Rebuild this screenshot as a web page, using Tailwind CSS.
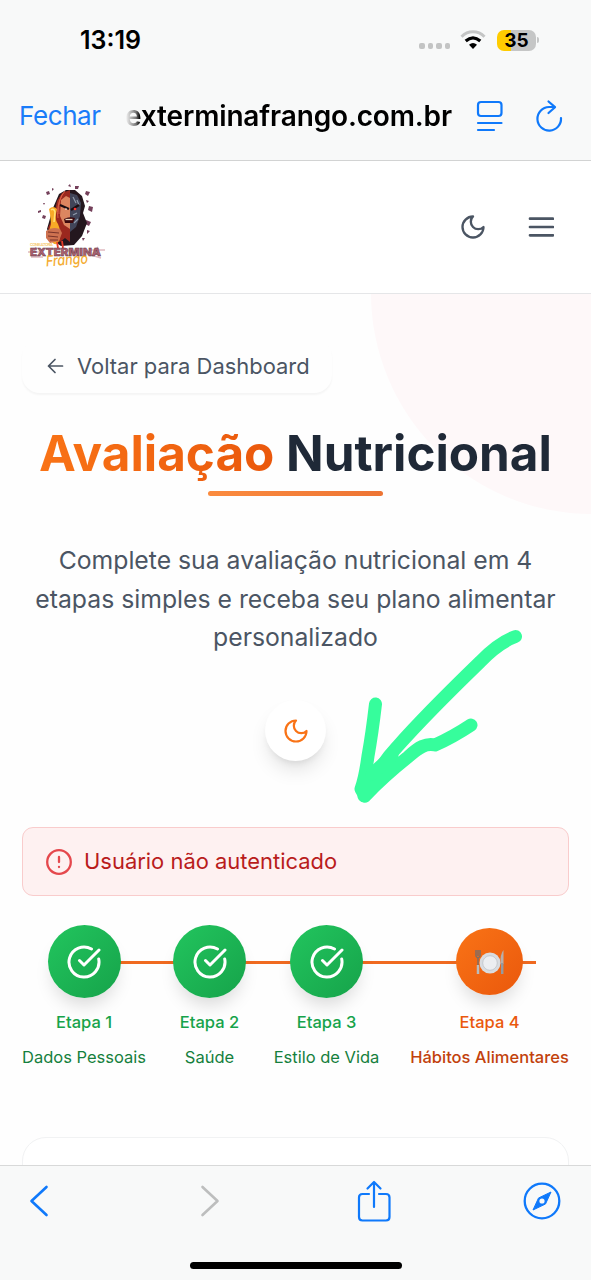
<!DOCTYPE html>
<html lang="pt-BR">
<head>
<meta charset="utf-8">
<title>Avaliação Nutricional</title>
<script src="https://cdn.jsdelivr.net/npm/@tailwindcss/browser@4"></script>
</head>
<body class="relative w-[591px] h-[1280px] overflow-hidden bg-[#fefefe] font-['Inter',sans-serif] flex flex-col">

<!-- Status bar and browser bar -->
<header class="h-[161px] shrink-0 bg-[#f8f9f9] border-b border-[#d2d3d3]">
  <div class="h-20 flex items-center pl-[80px] pr-[52px]">
    <span class="text-[25px] font-semibold leading-none text-black">13:19</span>
    <div class="ml-auto flex items-center">
      <div class="flex gap-[3px] mt-3 mr-[10px]">
        <i class="size-[5.500px] rounded-[2px] bg-[#c3c4c4]"></i><i class="size-[5.500px] rounded-[2px] bg-[#c3c4c4]"></i><i class="size-[5.500px] rounded-[2px] bg-[#c3c4c4]"></i><i class="size-[5.500px] rounded-[2px] bg-[#c3c4c4]"></i>
      </div>
      <svg class="w-[26px] h-[20px] mr-[11px]" viewBox="0 0 26 20" fill="none">
        <path d="M1.500 6.700C8 .2 18 .2 24.500 6.700" stroke="#c4c5c5" stroke-width="3"/>
        <path d="M5.700 11Q13 4.600 20.300 11" stroke="#000" stroke-width="3.200"/>
        <path d="M9 14.800Q13 11 17 14.800L13 19Z" fill="#000"/>
      </svg>
      <div class="w-[39px] h-[21px] rounded-[7px] bg-[linear-gradient(90deg,#ffcc00_36%,#c5c6c6_36%)] text-center text-[19px] leading-[21px] font-bold text-black">35</div>
      <i class="w-[2px] h-[6px] ml-px rounded-r bg-[#c5c6c6]"></i>
    </div>
  </div>
  <div class="h-[71px] flex items-center pl-[19px] pr-[28px]">
    <span class="text-[26px] tracking-[-0.4px] text-[#1a7cf9] w-[106px]">Fechar</span>
    <span class="text-[28px] font-semibold tracking-[-0.15px] whitespace-nowrap w-[327px] text-transparent bg-clip-text bg-[linear-gradient(90deg,#ffffff_0px,#777777_11px,#000_15px)]">exterminafrango.com.br</span>
    <svg class="w-[27px] h-[32px] ml-[24px]" viewBox="0 0 27 32" fill="none" stroke="#0f79fb" stroke-width="2.200" stroke-linecap="round"><rect x="2" y="2" width="23.500" height="14" rx="3"/><path d="M2 23H25.500M2 30H18"/></svg>
    <svg class="w-[28px] h-[34px] ml-auto" viewBox="0 0 28 34" fill="none" stroke="#0f79fb" stroke-width="2.200" stroke-linecap="round" stroke-linejoin="round"><path d="M26 19A11.800 11.800 0 1 1 14 8H20M13.500 2.500L20 8.200L13.500 14"/></svg>
  </div>
</header>

<!-- Site header -->
<nav class="relative z-10 h-[133px] shrink-0 bg-white border-b border-[#e5e6e8] flex items-center pl-[27px] pr-[37px]">
  <svg class="w-[80px] h-[90px]" viewBox="27 182 80 90">
    <g fill="#74405a"><path d="M46 192l3-1 1 3-3 1zM75 186l4 0-1 3-3 0zM86 191l4 1-2 4-3-2zM89 206l4 1-1 5-4-2zM86 220l5 2-2 4-4-2zM43 215l3 1-1 3-3-1zM52 188l2 1-2 2zM38 211l3-1 0 2-3 1zM86 200l3 1-2 2zM68 186l2-2 1 3zM43 203l2 0-1 2zM87 230l3 1-3 3zM82 238l3 0-2 3z"/></g>
    <path d="M59 194L66 190 75 190 82 196 85 206 83 213 87 223 82 236 74 245 61 246 52 240 47 229 53 208Z" fill="#24171e"/>
    <path d="M70 190L62 193 57 201 54 215 48 228 53 238 60 242 65 238 70 242Z" fill="#9b281e"/>
    <path d="M65 191q-8 9-6 23M62 195q-6 12-4 23M54 221q-2 8 3 14" stroke="#db6044" fill="none"/>
    <path d="M61 200L66 196 70 198V229L64 225 60 216Z" fill="#dc8660"/>
    <path d="M70 193L77 195 81 203 80 216 76 227 70 232Z" fill="#414559"/>
    <path d="M73 197l3 6M77 200l2 5M73 215l4-2M74 223l4-4" stroke="#8f9aaa" stroke-width="1.200"/>
    <path d="M60 205l9 4M71 210l8-5" stroke="#1a0d12" stroke-width="2.200"/>
    <circle cx="66" cy="209" r=".8" fill="#fff"/><circle cx="75" cy="209" r="1.300" fill="#ff332e"/>
    <path d="M64 219q5-3 11-1l-2 5h-8z" fill="#3b080c"/><path d="M65.500 219.500h7" stroke="#ecd8c0" stroke-width="1.300"/>
    <path d="M49 209q4-4 8 0l-1 5q-1 6 2 10 4 9 1 17-3 6-7 1-5-8-1-18l-1-10z" fill="#f8aa27"/>
    <path d="M51 210q3-2 4 2l-1 10" stroke="#ffe277" stroke-width="1.500" fill="none"/>
    <path d="M46 231q6-5 14-2l2 4-3 8-9 2-4-5z" fill="#ce7250"/><path d="M48 232l11 1M48 236l10 1M50 240l8 0" stroke="#793329"/>
    <path d="M57 242l1 6M62 241l1 7" stroke="#e93d29" stroke-width="1.800"/>
    <path d="M28 252h12M89 250h16M31 257h12M91 255l10 3M36 247l-2 4M97 247l2 3" stroke="#dfb9c0" stroke-width="1.500"/>
    <text x="30" y="245.500" font-size="4" font-weight="600" fill="#f7c76a" font-family="Inter" textLength="23">CONSULTORIA</text>
    <text x="30" y="256" font-size="10.500" font-weight="900" fill="#ad6170" stroke="#54303c" stroke-width=".4" font-family="Inter" textLength="71" lengthAdjust="spacingAndGlyphs">EXTERMINA</text>
    <text x="46" y="265" font-size="15" font-weight="500" font-style="italic" fill="#f4ac32" font-family="Inter" textLength="42" lengthAdjust="spacingAndGlyphs" transform="rotate(-4 66 262)">Frango</text>
  </svg>
  <svg class="size-[28px] ml-auto" viewBox="0 0 24 24" fill="none" stroke="#4b5563" stroke-width="2" stroke-linecap="round" stroke-linejoin="round"><path d="M12 3a6 6 0 0 0 9 9 9 9 0 1 1-9-9Z"/></svg>
  <svg class="w-[26px] h-[20px] ml-[41px]" viewBox="0 0 26 20" fill="none" stroke="#4b5563" stroke-width="2.700" stroke-linecap="round"><path d="M2 1.700H25M2 10H25M2 18.300H25"/></svg>
</nav>

<main class="relative flex-1 min-h-0 overflow-hidden px-[22px] pt-[45px] flex flex-col">
  <div class="absolute left-[371px] top-[-222px] size-[442px] rounded-full bg-[#fef8f9]"></div>

  <a class="relative w-[310px] h-[54px] shrink-0 rounded-[18px] bg-[#fefefe] shadow-[0_2px_2px_rgba(0,0,0,0.04)] flex items-center pl-[25px] text-[#4b5563]">
    <svg class="w-[17px] h-[16px]" viewBox="0 0 17 16" fill="none" stroke="currentColor" stroke-width="1.700" stroke-linecap="round" stroke-linejoin="round"><path d="M15.500 8H1.500M8 1.500L1.500 8L8 14.500"/></svg>
    <span class="ml-[13px] text-[21.950px] whitespace-nowrap">Voltar para Dashboard</span>
  </a>

  <h1 class="relative mt-[29px] h-[62px] shrink-0 leading-[62px] text-center text-[49.400px] font-bold whitespace-nowrap text-[#1f2937]"><span class="inline-block text-transparent bg-clip-text bg-linear-to-r from-[#f97316] to-[#ea580c]">Avaliação</span> Nutricional</h1>
  <div class="relative mx-auto mt-[7px] h-[5px] w-[175px] shrink-0 rounded-full bg-linear-to-r from-[#fb8b3e] to-[#ed7434]"></div>

  <p class="relative mt-[45px] h-[116px] shrink-0 text-center text-[24.750px] leading-[38.600px] text-[#4b5563] whitespace-nowrap">Complete sua avaliação nutricional em 4<br>etapas simples e receba seu plano alimentar<br>personalizado</p>

  <div class="relative mx-auto mt-[43px] size-[61px] shrink-0 rounded-full bg-white shadow-[0_12px_20px_-4px_rgba(0,0,0,0.12),0_5px_8px_-5px_rgba(0,0,0,0.12)] flex items-center justify-center">
    <svg class="size-[28px]" viewBox="0 0 24 24" fill="none" stroke="#f97316" stroke-width="1.900" stroke-linecap="round" stroke-linejoin="round"><path d="M12 3a6 6 0 0 0 9 9 9 9 0 1 1-9-9Z"/></svg>
  </div>

  <div class="mt-[66px] h-[69px] shrink-0 rounded-[11px] border-[1.500px] border-[#f9cccc] bg-[#fef1f1] flex items-center pl-[23px]">
    <svg class="size-[26px]" viewBox="0 0 26 26" fill="none" stroke="#e5484d" stroke-width="2.300" stroke-linecap="round"><circle cx="13" cy="13" r="11.800"/><path d="M13 8V13M13 17.800V18"/></svg>
    <span class="ml-[12px] text-[21.950px] text-[#b91c1c] whitespace-nowrap">Usuário não autenticado</span>
  </div>

  <section class="relative mt-[29px] h-[150px] shrink-0 flex text-center text-[16.500px] leading-6 text-[#15803d] whitespace-nowrap">
    <div class="absolute left-[62px] top-[36px] w-[452px] h-[3px] bg-[#f06a20]"></div>
    <div class="relative w-[124px] flex flex-col items-center">
      <div class="size-[73px] shrink-0 rounded-full bg-linear-to-br from-[#22c55e] to-[#16a34a] shadow-[0_12px_18px_-5px_rgba(0,0,0,0.15)] flex items-center justify-center">
        <svg class="size-[36px]" viewBox="0 0 24 24" fill="none" stroke="white" stroke-width="2" stroke-linecap="round" stroke-linejoin="round"><path d="M21.800 10A10 10 0 1 1 17 3.335M9 11l3 3L22 4"/></svg>
      </div>
      <b class="mt-[12px] font-medium text-[#16a34a]">Etapa 1</b><span class="mt-[11px]">Dados Pessoais</span>
    </div>
    <div class="relative ml-[27px] w-[73px] flex flex-col items-center">
      <div class="size-[73px] shrink-0 rounded-full bg-linear-to-br from-[#22c55e] to-[#16a34a] shadow-[0_12px_18px_-5px_rgba(0,0,0,0.15)] flex items-center justify-center">
        <svg class="size-[36px]" viewBox="0 0 24 24" fill="none" stroke="white" stroke-width="2" stroke-linecap="round" stroke-linejoin="round"><path d="M21.800 10A10 10 0 1 1 17 3.335M9 11l3 3L22 4"/></svg>
      </div>
      <b class="mt-[12px] font-medium text-[#16a34a]">Etapa 2</b><span class="mt-[11px]">Saúde</span>
    </div>
    <div class="relative ml-[28px] w-[105px] flex flex-col items-center">
      <div class="size-[73px] shrink-0 rounded-full bg-linear-to-br from-[#22c55e] to-[#16a34a] shadow-[0_12px_18px_-5px_rgba(0,0,0,0.15)] flex items-center justify-center">
        <svg class="size-[36px]" viewBox="0 0 24 24" fill="none" stroke="white" stroke-width="2" stroke-linecap="round" stroke-linejoin="round"><path d="M21.800 10A10 10 0 1 1 17 3.335M9 11l3 3L22 4"/></svg>
      </div>
      <b class="mt-[12px] font-medium text-[#16a34a]">Etapa 3</b><span class="mt-[11px]">Estilo de Vida</span>
    </div>
    <div class="relative ml-[31px] w-[159px] flex flex-col items-center">
      <div class="my-[3px] size-[67px] shrink-0 rounded-full bg-linear-to-br from-[#f97316] to-[#ea580c] shadow-[0_12px_18px_-5px_rgba(0,0,0,0.15)] flex items-center justify-center">
        <svg class="w-[30px] h-[26px]" viewBox="0 0 30 26" fill="none">
          <circle cx="15" cy="14" r="10.500" fill="#d9dce0"/><circle cx="15" cy="14" r="7.300" fill="#eceef1" stroke="#bec3c8" stroke-width=".8"/>
          <path d="M3 1V7M1 1V7Q3 11 5 7V1M3 8V24" stroke="#806d64" stroke-width="1.500"/><path d="M3 16V25" stroke="#b8bcbf" stroke-width="2.500"/>
          <path d="M28.500 1Q25 5 25.500 15H28.500Z" fill="#b7afab"/><path d="M27.200 14V25" stroke="#949aa0" stroke-width="2.500"/>
        </svg>
      </div>
      <b class="mt-[12px] font-medium text-[#ea580c]">Etapa 4</b><span class="mt-[11px] font-medium text-[#c2410c]">Hábitos Alimentares</span>
    </div>
  </section>

  <div class="mt-[62px] h-[100px] shrink-0 rounded-[24px] bg-white border-[1.500px] border-[#f1f2f3]"></div>
</main>

<!-- Browser toolbar -->
<footer class="relative h-[115px] shrink-0 bg-[#f8f9f9] border-t border-[#d8d9d9]">
  <div class="flex items-center h-[70px] pl-[29px]">
    <svg class="w-[20px] h-[32px]" viewBox="0 0 20 32" fill="none" stroke="#0f79fb" stroke-width="2.600" stroke-linecap="round" stroke-linejoin="round"><path d="M17.500 2L2.500 16L17.500 30"/></svg>
    <svg class="w-[20px] h-[32px] ml-[151px]" viewBox="0 0 20 32" fill="none" stroke="#bdbebe" stroke-width="2.600" stroke-linecap="round" stroke-linejoin="round"><path d="M2.500 2L17.500 16L2.500 30"/></svg>
    <svg class="w-[34px] h-[42px] ml-[137px]" viewBox="0 0 34 42" fill="none" stroke="#0f79fb" stroke-width="2.200" stroke-linecap="round" stroke-linejoin="round"><path d="M12 14H5.500Q2 14 2 17.500V37Q2 40.500 5.500 40.500H29Q32.500 40.500 32.500 37V17.500Q32.500 14 29 14H22M17 27V2M10.500 8.500L17 2L23.500 8.500"/></svg>
    <svg class="size-[38px] ml-[132px]" viewBox="0 0 38 38" fill="none"><circle cx="19" cy="19" r="17.300" stroke="#0f79fb" stroke-width="2.300"/><path d="M28 10L22.500 22L10 28L15.500 16Z" fill="#0f79fb" stroke="#0f79fb" stroke-linejoin="round"/><circle cx="19" cy="19" r="2.600" fill="#f8f9f9"/></svg>
  </div>
  <div class="mx-auto mt-[26px] w-[212px] h-[7px] rounded-full bg-black"></div>
</footer>

<!-- Hand-drawn arrow annotation -->
<svg class="absolute left-[340px] top-[620px] w-[200px] h-[190px] z-20" viewBox="340 620 200 190" fill="none" stroke="#36fd9c" stroke-width="13" stroke-linecap="round" stroke-linejoin="round">
  <path d="M515.500 636.500Q498 643 480 662C449 692 420 721 397 747Q380 765 364 796"/>
  <path d="M375.500 704Q372 734 368 756Q365 778 361 789L365 796Q383 777 408 757C419 747 426 743 435 745Q453 737 471 725"/>
  <path d="M372 774L392 756"/>
</svg>
</body>
</html>
